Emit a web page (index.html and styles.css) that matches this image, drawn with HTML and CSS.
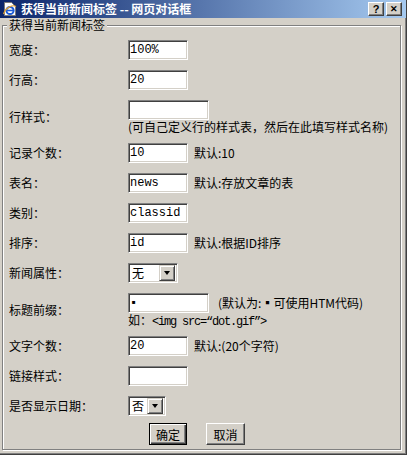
FILE: index.html
```
<!DOCTYPE html>
<html lang="zh-CN">
    <head>
        <meta charset="UTF-8">
        <title>获得当前新闻标签 -- 网页对话框</title>
        <link rel="stylesheet" href="styles.css">
    </head>
    <body>
        <div class="dialog">
            <div class="titlebar">
                <svg class="appIcon" width="16" height="16" viewBox="0 0 16 16">
                    <path d="M2.5 1.5h7l4 4v9h-11z" fill="#fff" stroke="#7a7a7a"/>
                    <circle cx="8" cy="9.5" r="3.6" fill="none" stroke="#1d5cd6" stroke-width="2"/>
                    <path d="M4.5 9.5h7" stroke="#1d5cd6" stroke-width="1.6"/>
                    <path d="M1.5 13C4 6 11 3.5 14 5.5" fill="none" stroke="#e0a030" stroke-width="1.2"/>
                </svg>
                <span class="caption">获得当前新闻标签 -- 网页对话框</span>
                <span class="captionButton help">?</span>
                <span class="captionButton close">&#x2715;</span>
            </div>
            <div class="client">
                <fieldset class="group">
                    <legend>获得当前新闻标签</legend>

                    <div class="row">
                        <span class="label">宽度：</span>
                        <span class="field"><input class="textBox" type="text" value="100%"></span>
                    </div>
                    <div class="row">
                        <span class="label">行高：</span>
                        <span class="field"><input class="textBox" type="text" value="20"></span>
                    </div>
                    <div class="row">
                        <span class="label">行样式：</span>
                        <span class="field stacked">
                            <input class="textBox wide" type="text" value="">
                            <span class="hint">(可自己定义行的样式表，然后在此填写样式名称)</span>
                        </span>
                    </div>
                    <div class="row">
                        <span class="label">记录个数：</span>
                        <span class="field"><input class="textBox" type="text" value="10"><span class="note">默认:10</span></span>
                    </div>
                    <div class="row">
                        <span class="label">表名：</span>
                        <span class="field"><input class="textBox" type="text" value="news"><span class="note">默认:存放文章的表</span></span>
                    </div>
                    <div class="row">
                        <span class="label">类别：</span>
                        <span class="field"><input class="textBox" type="text" value="classid"></span>
                    </div>
                    <div class="row">
                        <span class="label">排序：</span>
                        <span class="field"><input class="textBox" type="text" value="id"><span class="note">默认:根据ID排序</span></span>
                    </div>
                    <div class="row">
                        <span class="label">新闻属性：</span>
                        <span class="field">
                            <span class="dropDown">
                                <span class="dropValue">无</span>
                                <span class="dropArrow"></span>
                            </span>
                        </span>
                    </div>
                    <div class="row">
                        <span class="label">标题前缀：</span>
                        <span class="field stacked">
                            <span class="inline">
                                <input class="textBox wide" type="text" value="▪">
                                <span class="note far">(默认为:▪可使用HTM代码)</span>
                            </span>
                            <span class="hint">如：<span class="mono">&lt;img src=“dot.gif”&gt;</span></span>
                        </span>
                    </div>
                    <div class="row">
                        <span class="label">文字个数：</span>
                        <span class="field"><input class="textBox" type="text" value="20"><span class="note">默认:(20个字符)</span></span>
                    </div>
                    <div class="row">
                        <span class="label">链接样式：</span>
                        <span class="field"><input class="textBox" type="text" value=""></span>
                    </div>
                    <div class="row">
                        <span class="label">是否显示日期：</span>
                        <span class="field">
                            <span class="dropDown narrow">
                                <span class="dropValue">否</span>
                                <span class="dropArrow"></span>
                            </span>
                        </span>
                    </div>

                    <div class="buttons">
                        <button class="pushButton default" type="button">确定</button>
                        <button class="pushButton" type="button">取消</button>
                    </div>
                </fieldset>
            </div>
        </div>
    </body>
</html>
```

FILE: styles.css
```
html, body {
    margin: 0;
    padding: 0;
    background: #d4d0c8;
}

body {
    font-family: "Noto Sans CJK SC", sans-serif;
    font-size: 12px;
    color: #000;
}

.dialog {
    width: 407px;
    height: 455px;
    box-sizing: border-box;
    border-right: 1px solid #404040;
    border-bottom: 1px solid #404040;
    box-shadow: inset -1px -1px #808080;
    overflow: hidden;
}

.titlebar {
    height: 18px;
    display: flex;
    align-items: center;
    background: linear-gradient(to right, #0a246a, #a6caf0);
    color: #fff;
}

.appIcon {
    margin-left: 2px;
    flex: none;
}

.caption {
    margin-left: 3px;
    font-weight: bold;
    line-height: 18px;
    white-space: nowrap;
}

.captionButton {
    width: 16px;
    height: 14px;
    box-sizing: border-box;
    background: #d4d0c8;
    border: 1px solid;
    border-color: #fff #404040 #404040 #fff;
    box-shadow: inset -1px -1px #808080;
    color: #000;
    font-family: "Liberation Sans", sans-serif;
    font-weight: bold;
    font-size: 11px;
    line-height: 12px;
    text-align: center;
    flex: none;
}

.help {
    margin-left: auto;
}

.close {
    margin-left: 2px;
    margin-right: 4px;
    font-size: 9px;
}

.client {
    padding: 1px 5px 0 2px;
}

.group {
    margin: 0;
    padding: 0 0 3px 0;
    border: 1px solid #808080;
    box-shadow: inset 1px 1px #fff, 1px 1px #fff;
    height: 431px;
    box-sizing: border-box;
}

.group legend {
    margin-left: 4px;
    padding: 0 2px;
    line-height: 12px;
    background: #d4d0c8;
}

.row {
    display: flex;
    align-items: center;
    padding: 5px 0;
}

.row:first-of-type {
    padding-top: 9px;
}

.label {
    width: 119px;
    padding-left: 6px;
    flex: none;
    white-space: nowrap;
    line-height: 14px;
}

.field {
    display: flex;
    align-items: center;
    line-height: 14px;
}

.field.stacked {
    flex-direction: column;
    align-items: flex-start;
}

.inline {
    display: flex;
    align-items: center;
    height: 20px;
}

.textBox {
    box-sizing: border-box;
    width: 60px;
    height: 20px;
    margin: 0;
    padding: 0 1px;
    border: 1px solid;
    border-color: #808080 #fff #fff #808080;
    box-shadow: inset 1px 1px #404040, inset -1px -1px #d4d0c8;
    background: #fff;
    font-family: "Liberation Mono", monospace;
    font-size: 12px;
    color: #000;
    outline: none;
}

.textBox.wide {
    width: 81px;
}

.note {
    margin-left: 6px;
    white-space: nowrap;
}

.note.far {
    margin-left: 9px;
}

.hint {
    display: block;
    height: 13px;
    line-height: 13px;
    white-space: nowrap;
    overflow: visible;
}

.mono {
    font-family: "Liberation Mono", monospace;
    letter-spacing: -1.2px;
}

.dropDown {
    box-sizing: border-box;
    width: 50px;
    height: 20px;
    display: flex;
    align-items: center;
    border: 1px solid;
    border-color: #808080 #fff #fff #808080;
    box-shadow: inset 1px 1px #404040, inset -1px -1px #d4d0c8;
    background: #fff;
    padding: 2px;
}

.dropDown.narrow {
    width: 38px;
}

.dropValue {
    flex: 1;
    padding-left: 1px;
}

.dropArrow {
    width: 16px;
    height: 16px;
    box-sizing: border-box;
    background: #d4d0c8;
    border: 1px solid;
    border-color: #d4d0c8 #404040 #404040 #d4d0c8;
    box-shadow: inset 1px 1px #fff, inset -1px -1px #808080;
    display: flex;
    align-items: center;
    justify-content: center;
}

.dropArrow::after {
    content: "";
    border-left: 3.5px solid transparent;
    border-right: 3.5px solid transparent;
    border-top: 4px solid #000;
}

.buttons {
    display: flex;
    gap: 19px;
    padding: 2px 0 0 146px;
}

.pushButton {
    box-sizing: border-box;
    width: 39px;
    height: 22px;
    margin: 0;
    padding: 0;
    background: #d4d0c8;
    border: 1px solid;
    border-color: #fff #404040 #404040 #fff;
    box-shadow: inset -1px -1px #808080;
    font-family: "Noto Sans CJK SC", sans-serif;
    font-size: 12px;
    color: #000;
}

.pushButton.default {
    width: 38px;
    border: 1px solid #000;
    box-shadow: inset 1px 1px #fff, inset -1px -1px #404040, inset -2px -2px #808080;
}
```
